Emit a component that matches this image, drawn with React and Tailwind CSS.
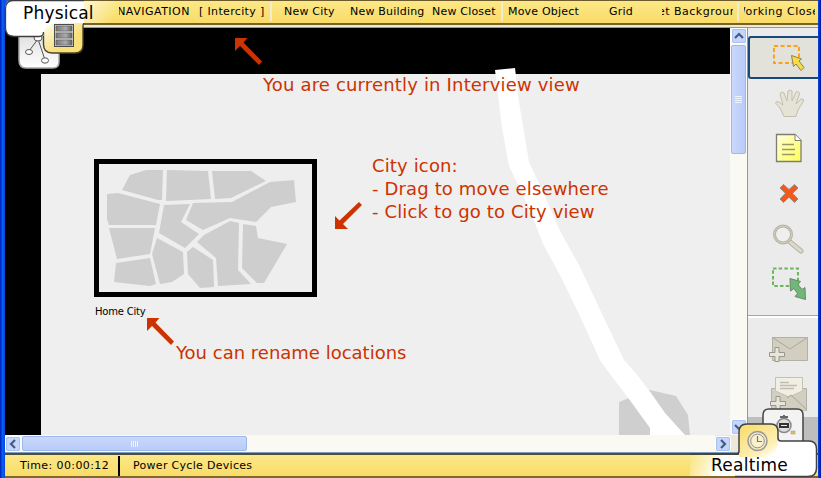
const NavItem = ({ children, className }) => (
  <button className={`flex h-5 shrink-0 items-center whitespace-nowrap ${className}`}>
    <span className="shrink-0">{children}</span>
  </button>
);

const Divider = () => <i className="h-[19px] w-[2px] shrink-0 bg-[#f3ecd0]" />;

const Note = ({ children, className }) => (
  <p className={`absolute whitespace-pre text-[18px] leading-[23px] text-[#cc3300] ${className}`}>{children}</p>
);

const blocks = [
  "122,190 130,175 146,170 163,170 162,200 158,200",
  "167,170 208,171 211,199 166,201",
  "212,171 251,171 266,181 231,198 215,199",
  "107,194 118,193 160,204 156,225 109,225 107,219",
  "109,228 155,228 150,254 117,259",
  "116,263 150,258 156,284 150,286 114,282",
  "164,205 190,204 181,222 199,234 185,248 159,233",
  "157,238 183,252 184,274 172,282 160,284 152,254",
  "193,203 232,202 270,182 294,180 296,202 271,207 256,222 230,218 203,230 186,220",
  "187,252 193,247 213,260 214,287 200,288 188,274",
  "197,242 204,235 230,221 239,223 238,270 251,284 218,286 216,258",
  "243,224 256,226 258,238 287,244 264,283 257,283 242,268",
];

const MapCanvas = () => (
  <svg className="block h-[407px] w-[725px]" viewBox="5 28 725 407">
    <path d="M5 28H730V435H5Z" fill="#000" />
    <path d="M41 74H730V435H41Z" fill="#efefef" />
    <path d="M619 435V402L629 398L650 390L676 396L688 415L690 435Z" fill="#cfcfcf" />
    <path d="M495 70L515 68L519 102L529 162L543 192L560 231L580 267L602 314L624 360L638 376L651 393L665 413L685 435H650V428L629 399L607 370L600 360L578 312L560 275L543 244L530 210L509 166L502 128Z" fill="#fff" />
    <rect x="96.5" y="161.500" width="218" height="133" fill="#eee" stroke="#000" strokeWidth="5" />
    {blocks.map((p) => (
      <polygon key={p} points={p} fill="#cecece" />
    ))}
    <g fill="#cc3300">
      <path d="M235 38H247.500L243.500 42.500L262 61.500L259 65L240 46L235 51Z" />
      <path d="M335 229V216L339.500 220.500L359 202L362 205L343 224L348 229Z" />
      <path d="M147 318H159.500L155.500 322.500L174 341.500L171 345L152 326L147 331Z" />
    </g>
  </svg>
);

const arrows = { up: "M4 10L8 6L12 10", down: "M4 6L8 10L12 6", left: "M10 4L6 8L10 12", right: "M6 4L10 8L6 12" };

const ScrollButton = ({ dir }) => (
  <svg className="h-4 w-4 shrink-0" viewBox="0 0 16 16">
    <rect x=".5" y=".5" width="15" height="15" rx="2" fill="#c5d6fc" stroke="#fff" />
    <rect x="1.500" y="1.500" width="13" height="13" rx="1.500" fill="none" stroke="#a9c0f0" />
    <path d={arrows[dir]} fill="none" stroke="#465b84" strokeWidth="2.200" />
  </svg>
);

const SelectIcon = () => (
  <svg className="h-8 w-9" viewBox="770 42 36 32">
    <rect x="774" y="46" width="25" height="17" fill="none" stroke="#f9a21b" strokeWidth="2" strokeDasharray="4 2.500" />
    <path d="M791.500 55.500L801.500 59L799 61L804 67.500L801 70.500L796 64L793.500 66.500Z" fill="#f8dc45" stroke="#8d8057" />
  </svg>
);
const HandIcon = () => (
  <svg className="h-8 w-9" viewBox="772 88 36 32">
    <path d="M784 116.500L780 108L775.500 103Q776 100.500 779 102L783 105L780 94Q781 90.500 784 93L787 101L788 91Q790 89 792 91L792 101L796 92Q799 90.500 799.500 94L796 104L801 99Q804 98.500 803.500 101L798 110L796 116.500Z" fill="#e5e2d6" stroke="#c3bfad" />
  </svg>
);
const NoteIcon = () => (
  <svg className="h-8 w-9" viewBox="771 132 36 32">
    <defs><linearGradient id="note" x2="1" y2="1"><stop stopColor="#ffffe0" /><stop offset="1" stopColor="#ffff55" /></linearGradient></defs>
    <path d="M776.500 134.500H795L801 140.500V161.500H776.500Z" fill="url(#note)" stroke="#7d7d75" strokeWidth="1.300" />
    <path d="M795 134.500V140.500H801" fill="#fff" stroke="#7d7d75" />
    <path d="M782 144.500H794M782 149.500H795M782 154.500H795" stroke="#99996a" strokeWidth="1.300" />
  </svg>
);
const DeleteIcon = () => (
  <svg className="h-8 w-9" viewBox="771 177 36 32">
    <path d="M783.500 184.500L789 189.500L794.500 184.500L798 188L792.500 193.300L798 199L794.500 202.500L789 197.200L783.500 202.500L780 199L785.500 193.300L780 188Z" fill="#f3591a" stroke="#8c8c88" />
  </svg>
);
const ZoomIcon = () => (
  <svg className="h-8 w-9" viewBox="771 222 36 32">
    <path d="M790 242L801 251" stroke="#b5b2a4" strokeWidth="5" strokeLinecap="round" />
    <path d="M790 242L801 251" stroke="#dcd9cc" strokeWidth="3" strokeLinecap="round" />
    <circle cx="783" cy="234.500" r="8.500" fill="#efefed" stroke="#b5b2a4" strokeWidth="3" />
    <circle cx="783" cy="234.500" r="8.500" fill="none" stroke="#d5d2c4" strokeWidth="1" />
  </svg>
);
const ResizeIcon = () => (
  <svg className="h-9 w-9" viewBox="770 266 36 36">
    <rect x="773" y="268.500" width="25" height="17.500" fill="none" stroke="#6cb55a" strokeWidth="2" strokeDasharray="3.500 2.200" />
    <path d="M790 278.500L800.500 281.500L798 284.500L802 289.500L805 287.500L805.500 299.500L795 296.500L797.500 293.500L794 288.500L790.500 291Z" fill="#70b878" stroke="#71856f" />
  </svg>
);
const MailIcon = () => (
  <svg className="h-8 w-10" viewBox="768 334 40 32">
    <path d="M772.500 337.500H807.500V360.500H772.500Z" fill="#d2cfc1" stroke="#b3b0a4" />
    <path d="M772.500 337.500L790 349L807.500 337.500" fill="none" stroke="#aaa799" />
    <path d="M775 347.500H779V352.500H784.500V356.500H779V361.500H775V356.500H769.500V352.500H775Z" fill="#e8e5da" stroke="#98958a" />
  </svg>
);
const OpenMailIcon = () => (
  <svg className="h-9 w-10" viewBox="768 375 40 36">
    <path d="M771.500 388.500H806.500V411H771.500Z" fill="#d2cfc1" stroke="#b3b0a4" />
    <path d="M775.500 377.500H802.500V391L789 397L775.500 391Z" fill="#f1efe4" stroke="#c5c2b2" />
    <path d="M780 382.500H789M780 385.500H797M780 388.500H794" stroke="#c0bdb0" strokeWidth="1.500" />
    <path d="M787 398L791 395L806 409" fill="none" stroke="#aaa799" />
    <path d="M776 396.500H780V401.500H785.500V405.500H780V411H776V405.500H770.500V401.500H776Z" fill="#e8e5da" stroke="#98958a" />
  </svg>
);

const PhysicalTabs = () => (
  <svg className="absolute left-0 top-0" width="120" height="72" viewBox="0 0 120 72">
    <defs>
      <linearGradient id="tab" x2="1" y2="1"><stop stopColor="#fff7bd" /><stop offset="1" stopColor="#f6d659" /></linearGradient>
      <linearGradient id="fade" gradientUnits="userSpaceOnUse" x1="50" y1="0" x2="112" y2="22"><stop offset=".2" stopColor="#fff" /><stop offset="1" stopColor="#fff" stopOpacity="0" /></linearGradient>
      <linearGradient id="tabFade" gradientUnits="userSpaceOnUse" x1="46" y1="22" x2="62" y2="46"><stop stopColor="#fffdf2" /><stop offset="1" stopColor="#f9e07a" /></linearGradient>
      <linearGradient id="grey" x2="0" y2="1"><stop stopColor="#ddd" /><stop offset="1" stopColor="#fff" /></linearGradient>
      <linearGradient id="cell" x2="1"><stop stopColor="#777" /><stop offset=".6" stopColor="#aaa" /><stop offset="1" stopColor="#666" /></linearGradient>
    </defs>
    <path d="M19 32H59V62Q59 68 53 68H26Q19 68 19 60Z" fill="url(#grey)" stroke="#aaa" strokeWidth="1.500" />
    <path d="M38 39L29 51M38 39L45 60" stroke="#555" strokeWidth="1" />
    <ellipse cx="38" cy="38" rx="4" ry="3" fill="#fff" stroke="#555" />
    <ellipse cx="29" cy="52" rx="3.500" ry="2.500" fill="#fff" stroke="#555" />
    <ellipse cx="45" cy="60.500" rx="3.500" ry="2.700" fill="#fff" stroke="#555" />
    <path d="M43.500 22H83V45Q83 53 75 53H52Q43.500 53 43.500 44Z" fill="url(#tabFade)" />
    <path d="M84 23.500Q83 24 83 26V45Q83 53 75 53H52Q43.500 53 43.500 44V33" fill="none" stroke="#4c4527" strokeWidth="1.400" />
    <path d="M5 0H9Q5 3 5 9Z" fill="#0b5cf0" />
    <path d="M84 1H120V23H84Z" fill="url(#fade)" />
    <path d="M5.500 9Q5.500 1 13 1H84V23H56Q44 24 43.500 36H14Q5.500 36 5.500 28Z" fill="#fff" />
    <path d="M54 1H84V23H54Z" fill="url(#fade)" />
    <path d="M84 .5H13Q5.500 .7 5.500 9V28Q5.500 36.500 14 36.500H39Q43.500 36.500 43.500 32" fill="none" stroke="#3d3d3d" strokeWidth="1.300" />
    <rect x="54.500" y="24.500" width="19" height="22" fill="#c9c9c9" stroke="#4c4c4c" />
    <path d="M56 26H72V31H56ZM56 33H72V38H56ZM56 40H72V45H56Z" fill="url(#cell)" stroke="#555" strokeWidth=".5" />
  </svg>
);

const RealtimeTabs = () => (
  <svg className="absolute bottom-0 right-0" width="131" height="72" viewBox="690 406 131 72">
    <defs>
      <linearGradient id="rtFade" gradientUnits="userSpaceOnUse" x1="692" y1="450" x2="722" y2="466"><stop stopColor="#fff" stopOpacity="0" /><stop offset="1" stopColor="#fff" /></linearGradient>
      <linearGradient id="rtTab" gradientUnits="userSpaceOnUse" x1="745" y1="428" x2="766" y2="460"><stop stopColor="#f9df76" /><stop offset=".75" stopColor="#fdf0b8" /><stop offset="1" stopColor="#fff" /></linearGradient>
    </defs>
    <path d="M763 445V415Q763 409 769 409H797Q803 409 803 415V445Z" fill="#f3f3f3" stroke="#444" strokeWidth="1.500" />
    <circle cx="784" cy="425.500" r="7" fill="#ddd" stroke="#888" strokeWidth="1.500" />
    <path d="M780 417H788M784 415V418" stroke="#666" strokeWidth="2" />
    <rect x="779" y="423" width="10" height="5" fill="#333" />
    <path d="M781 425.500H787" stroke="#eee" />
    <rect x="791" y="431" width="4" height="3" fill="#e3c04c" stroke="#999" strokeWidth=".5" />
    <path d="M739 455V432Q739 424 747 424H771Q778 424 778 432V441H809Q816 441 816 449V468Q816 476 808 476H739Z" fill="#fff" />
    <path d="M690 455H739V476H690Z" fill="url(#rtFade)" />
    <path d="M739 457V432Q739 424 747 424H771Q778 424 778 432V443Q777 457 764 457Z" fill="url(#rtTab)" />
    <path d="M690 454H736Q739 454 739 451V432Q739 424 747 424H771Q778 424 778 432V438Q778 441 781 441H809Q816.500 441 816.500 449V468Q816.500 476.500 808 476.500H735" fill="none" stroke="#414141" strokeWidth="1.500" />
    <circle cx="757.500" cy="441" r="9.500" fill="#f4e9bd" stroke="#999" strokeWidth="1.500" />
    <circle cx="757.500" cy="441" r="6.800" fill="#faf1cc" stroke="#929292" />
    <path d="M757.500 436V441.500H762" fill="none" stroke="#777" strokeWidth="1.200" />
  </svg>
);

export default function App() {
  return (
    <div className="relative flex h-[478px] w-[821px] overflow-hidden bg-[#efefef] font-['DejaVu_Sans',Verdana,sans-serif] text-black">
      <div className="w-[5px] shrink-0 bg-linear-to-r from-[#0018b8] via-[#0b5cf0] to-[#0846dd]" />
      <div className="flex w-[813px] shrink-0 flex-col">
        <nav className="flex h-[25px] shrink-0 items-start border-b-2 border-t border-b-[#756426] border-t-[#6d5b2c] bg-linear-to-b from-[#fce887] to-[#f9dc68] pt-[1px] text-[11px] tracking-[0.2px]">
          <NavItem className="ml-[114px] w-[71px] justify-end overflow-hidden pt-px tracking-[0.5px]">NAVIGATION</NavItem>
          <NavItem className="ml-[9px] w-[71px] pt-px tracking-[0.35px]">[ Intercity ]</NavItem>
          <Divider />
          <NavItem className="ml-[12px] w-[60px] pt-px">New City</NavItem>
          <NavItem className="ml-[6px] w-[76px] pt-px">New Building</NavItem>
          <NavItem className="ml-[6px] w-[69px] pt-px">New Closet</NavItem>
          <Divider />
          <NavItem className="ml-[5px] w-[80px] pt-px">Move Object</NavItem>
          <NavItem className="ml-[21px] w-[44px] pt-px">Grid</NavItem>
          <NavItem className="ml-[9px] w-[71px] justify-center overflow-hidden pt-px tracking-[0.5px]">Set Background</NavItem>
          <i className="w-[4px]" />
          <Divider />
          <NavItem className="ml-[5px] w-[71px] justify-center overflow-hidden pt-px tracking-[0.5px]">Working Closet</NavItem>
        </nav>
        <div className="h-[3px] shrink-0 border-b border-[#8d9aa8] bg-[#ece9d8]" />
        <main className="flex h-[425px] shrink-0">
          <div className="flex w-[743px] shrink-0 flex-col">
            <div className="flex h-[407px]">
              <MapCanvas />
              <div className="flex w-[18px] shrink-0 flex-col items-center border-r border-[#7e9db9] bg-[#faf9f4]">
                <ScrollButton dir="up" />
                <div className="mt-[1px] flex h-[109px] w-[15px] flex-col items-center justify-center gap-[1px] rounded-[2px] border border-[#9db8ec] bg-linear-to-r from-[#c9d8fc] to-[#b9cbf8]">
                  {[0, 1, 2, 3].map((n) => <i key={n} className="h-px w-[7px] bg-[#eef4fe]" />)}
                </div>
                <div className="mt-auto"><ScrollButton dir="down" /></div>
              </div>
            </div>
            <div className="flex h-[18px] items-center border-b border-[#7e9db9] bg-[#faf9f4]">
              <ScrollButton dir="left" />
              <div className="ml-[1px] flex h-[15px] w-[225px] items-center justify-center gap-[1px] rounded-[2px] border border-[#9db8ec] bg-linear-to-b from-[#c9d8fc] to-[#b9cbf8]">
                {[0, 1, 2, 3].map((n) => <i key={n} className="h-[6px] w-px bg-[#eef4fe]" />)}
              </div>
              <div className="ml-auto flex h-[17px] items-center bg-[#ece9d8]">
                <ScrollButton dir="right" />
                <i className="w-[17px]" />
              </div>
            </div>
          </div>
          <aside className="flex w-[70px] shrink-0 flex-col bg-[#ebebeb]">
            <div className="mt-[8px] flex h-[43px] shrink-0 items-center rounded-l-[3px] border-2 border-r-0 border-[#174a7c] bg-[#e2e1da] pl-[20px]">
              <SelectIcon />
            </div>
            <div className="flex flex-col pl-[23px]">
              <div className="ml-[1px] mt-[9px] h-8"><HandIcon /></div>
              <div className="mt-[12px] h-8"><NoteIcon /></div>
              <div className="mt-[13px] h-8"><DeleteIcon /></div>
              <div className="mt-[13px] h-8"><ZoomIcon /></div>
              <div className="-ml-[1px] mt-[12px] h-9"><ResizeIcon /></div>
            </div>
            <div className="mt-[13px] h-[3px] shrink-0 border-t border-[#a9a78e] bg-white" />
            <div className="flex flex-col pl-[20px]">
              <div className="mt-[16px] h-8"><MailIcon /></div>
              <div className="mt-[9px] h-9"><OpenMailIcon /></div>
            </div>
            <div className="mt-[6px] flex-1 bg-[#bebebe]" />
          </aside>
        </main>
        <footer className="flex h-[25px] shrink-0 items-center border-b-2 border-t-2 border-b-[#7d6928] border-t-[#4f4c40] bg-linear-to-b from-[#fce887] to-[#f9dc68] text-[11px] tracking-[0.3px]">
          <span className="ml-[15px] w-[98px] whitespace-nowrap pt-[2px] tracking-[0.4px]">Time: 00:00:12</span>
          <i className="h-5 w-[2px] bg-black" />
          <span className="ml-[13px] whitespace-nowrap pt-[2px]">Power Cycle Devices</span>
        </footer>
      </div>
      <div className="w-[3px] shrink-0 bg-linear-to-r from-[#0b45e0] to-[#0012a0]" />

      <Note className="left-[263px] top-[73px] tracking-[0.17px]">You are currently in Interview view</Note>
      <Note className="left-[372px] top-[154px] tracking-[0.14px]">{"City icon:\n- Drag to move elsewhere\n- Click to go to City view"}</Note>
      <Note className="left-[176px] top-[341px]">You can rename locations</Note>
      <span className="absolute left-[95px] top-[305px] whitespace-nowrap text-[10px] leading-[14px] tracking-[-0.2px]">Home City</span>
      <PhysicalTabs />
      <span className="absolute left-[23px] top-[2px] text-[17px] leading-[22px] tracking-[0.2px]">Physical</span>
      <RealtimeTabs />
      <span className="absolute left-[711px] top-[454px] text-[17px] leading-[22px] tracking-[0.25px]">Realtime</span>
    </div>
  );
}
